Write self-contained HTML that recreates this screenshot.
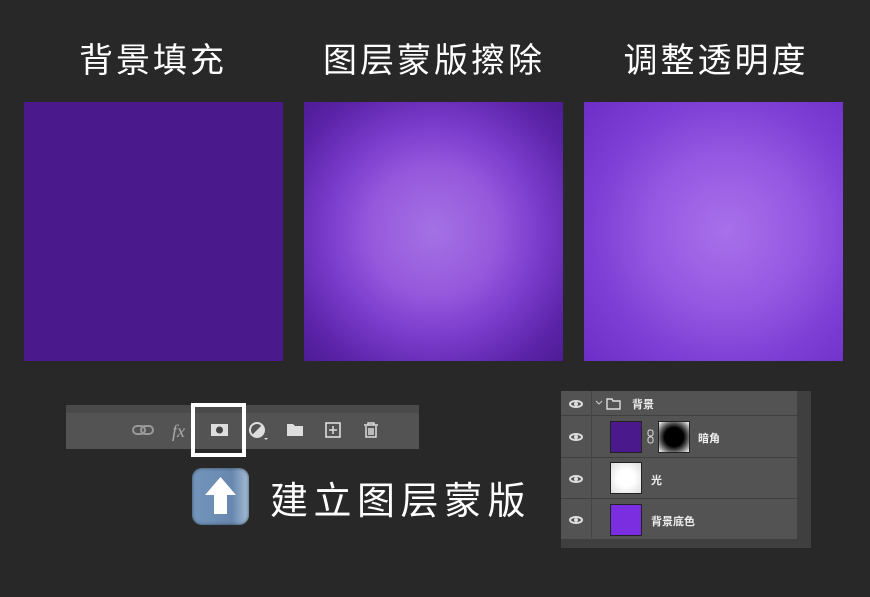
<!DOCTYPE html>
<html><head><meta charset="utf-8"><style>
*{margin:0;padding:0;box-sizing:border-box}
body{width:870px;height:597px;background:#282828;position:relative;overflow:hidden;font-family:"Liberation Sans","Noto Sans CJK SC",sans-serif;color:#fff}
.t{position:absolute;top:33px;font-size:34px;letter-spacing:3px;white-space:nowrap;transform:translateX(-50%)}
.sq{position:absolute;top:102px;width:259px;height:259px}
.tb{position:absolute;left:66px;top:405px;width:353px;height:44px;background:#535353;border-top:8px solid #4a4a4a}
.pan{position:absolute;left:561px;top:391px;width:250px;height:157px;background:#3f3f3f}
.row{position:absolute;left:0;width:236px;background:#535353;border-bottom:1px solid #3f3f3f}
.eye{position:absolute;left:8px;width:14px;height:8px;border:2px solid #ddd;border-radius:50%/50%}
.eye:after{content:"";position:absolute;left:3px;top:0px;width:4px;height:4px;background:#ddd;border-radius:50%}
.lab{position:absolute;font-size:11px;font-weight:bold;color:#eee}
.th{position:absolute;left:49px;width:32px;height:32px;border:1px solid #222}
</style></head><body>
<div class="t" style="left:153px">背景填充</div>
<div class="t" style="left:434px">图层蒙版擦除</div>
<div class="t" style="left:716px">调整透明度</div>
<div class="sq" style="left:24px;background:#4a1a8c"></div>
<div class="sq" style="left:304px;background:radial-gradient(circle at 50% 50%,#a472e4 0%,#9658dc 35%,#7a3ccc 58%,#5a22a6 85%,#4e1c98 100%)"></div>
<div class="sq" style="left:584px;background:radial-gradient(circle at 55% 50%,#a870ea 0%,#9558e2 40%,#7c3ed4 70%,#6c2ec6 100%)"></div>

<div class="tb"></div>
<svg style="position:absolute;left:66px;top:413px" width="353" height="36">
<g fill="none" stroke="#999" stroke-width="2"><rect x="67" y="13" width="12" height="8" rx="4"/><rect x="75" y="13" width="12" height="8" rx="4"/></g>
<text x="106" y="24" font-family="Liberation Serif" font-style="italic" font-size="18" fill="#aaa">fx</text>
<rect x="145" y="11" width="17" height="12" fill="#ddd"/><circle cx="153.5" cy="17" r="3.5" fill="#444"/>
<circle cx="191" cy="17" r="7" fill="none" stroke="#ddd" stroke-width="2"/><path d="M186 22 L196 12 A7 7 0 0 1 186 22Z" fill="#ddd"/><path d="M198 25h4l-2 2z" fill="#ddd"/>
<path d="M221 11h6l2 2h8v10h-16z" fill="#ddd"/>
<rect x="260" y="10" width="14" height="14" fill="none" stroke="#ddd" stroke-width="1.6"/><path d="M267 13v8M263 17h8" stroke="#ddd" stroke-width="1.5"/>
<path d="M298 12h14M302 12v-2h6v2M300 13v11h10v-11M303 15v7M305 15v7M307 15v7" stroke="#ddd" stroke-width="1.5" fill="none"/>
</svg>
<div style="position:absolute;left:191px;top:403px;width:55px;height:54px;border:4px solid #fff"></div>

<div style="position:absolute;left:192px;top:468px;width:57px;height:57px;border-radius:10px;background:linear-gradient(90deg,#7496bc,#6787ae 70%,#a8bed6);box-shadow:inset 0 0 3px #345"></div>
<svg style="position:absolute;left:192px;top:468px" width="57" height="57"><path d="M28.5 9 L44 27 H35 V46 H22 V27 H13 Z" fill="#fff"/></svg>
<div style="position:absolute;left:270px;top:470px;font-size:38px;letter-spacing:5.5px;white-space:nowrap">建立图层蒙版</div>

<div class="pan">
<div class="row" style="top:0;height:25px"></div>
<div class="row" style="top:25px;height:42px"></div>
<div class="row" style="top:67px;height:41px"></div>
<div class="row" style="top:108px;height:41px"></div>
<div style="position:absolute;left:30px;top:0;width:1px;height:149px;background:#444"></div>
<div class="eye" style="top:9px"></div>
<div class="eye" style="top:42px"></div>
<div class="eye" style="top:84px"></div>
<div class="eye" style="top:125px"></div>
<svg style="position:absolute;left:34px;top:6px" width="30" height="14"><path d="M1 4l3 3 3-3" stroke="#ccc" fill="none"/><path d="M12 2h5l1 2h7v8h-13z" fill="none" stroke="#ddd" stroke-width="1.4"/></svg>
<div class="lab" style="left:71px;top:5px">背景</div>
<div class="th" style="top:30px;background:#4a1a8c"></div>
<svg style="position:absolute;left:86px;top:38px" width="8" height="16"><rect x="1" y="1" width="5" height="6" rx="2" fill="none" stroke="#ddd"/><rect x="1" y="8" width="5" height="6" rx="2" fill="none" stroke="#ddd"/></svg>
<div class="th" style="left:97px;top:30px;background:radial-gradient(circle,#000 45%,#555 65%,#fff 100%);border-color:#222"></div>
<div class="lab" style="left:137px;top:39px">暗角</div>
<div class="th" style="top:71px;background:radial-gradient(circle,#fff 40%,#ddd 100%)"></div>
<div class="lab" style="left:90px;top:81px">光</div>
<div class="th" style="top:113px;background:#7a2ee0"></div>
<div class="lab" style="left:90px;top:122px">背景底色</div>
</div>
</body></html>
